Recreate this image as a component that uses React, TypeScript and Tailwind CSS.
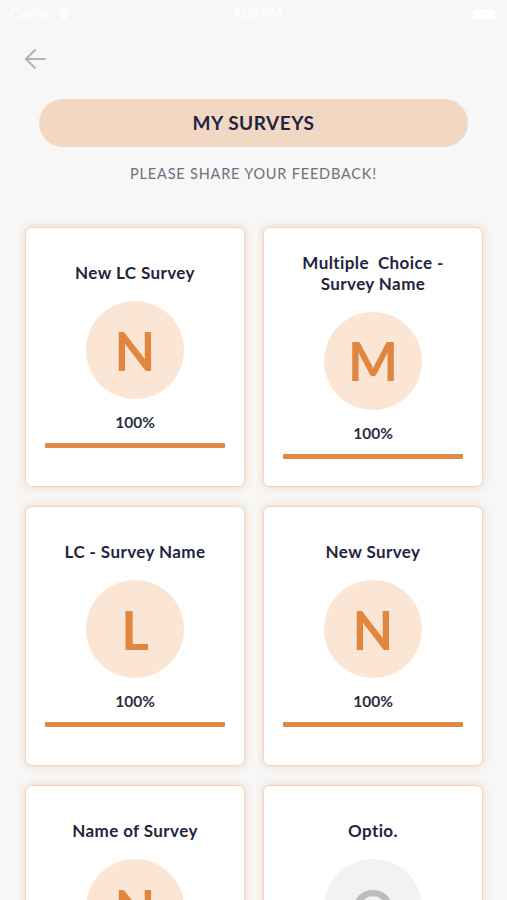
import React from "react";

type Survey = { title: React.ReactNode; letter: string; gray?: boolean };

const surveys: Survey[] = [
  { title: "New LC Survey", letter: "N" },
  {
    title: (
      <>
        Multiple{"\u00a0"} Choice -<br />
        Survey Name
      </>
    ),
    letter: "M",
  },
  { title: "LC - Survey Name", letter: "L" },
  { title: "New Survey", letter: "N" },
  { title: "Name of Survey", letter: "N" },
  { title: "Optio.", letter: "O", gray: true },
];

function Card({ s }: { s: Survey }) {
  return (
    <div className="h-[260px] bg-white rounded-[7px] border border-[#f2d6c2] shadow-[0_0_6px_2px_rgba(240,205,180,0.55)] flex flex-col items-center justify-center px-[19px]">
      <div className="-mt-[4px] text-[17px] leading-[21px] tracking-[0.4px] font-bold text-[#1f2541] text-center">
        {s.title}
      </div>
      <div
        className={`mt-[18px] w-[98px] h-[98px] rounded-full flex items-center justify-center ${
          s.gray ? "bg-[#f2f2f2]" : "bg-[#fbe6d6]"
        }`}
      >
        <span
          className={`text-[53px] leading-none font-bold ${s.gray ? "text-[#bdbdbd]" : "text-[#e0863f]"}`}
        >
          {s.letter}
        </span>
      </div>
      <div className="mt-[13px] text-[15.5px] leading-[20px] font-bold text-[#2a2f44]">100%</div>
      <div className="mt-[11px] w-full h-[5px] bg-[#e08944] rounded-[1px]" />
    </div>
  );
}

export default function App() {
  return (
    <div
      className="min-h-screen bg-[#f7f7f7] overflow-hidden"
      style={{ fontFamily: "Lato, 'Open Sans', sans-serif" }}
    >
      {/* status bar */}
      <div className="h-[27px] flex items-center justify-between px-[10px] text-white text-[13px] font-semibold">
        <div className="flex items-center gap-[6px]">
          <span>Carrier</span>
          <svg width="16" height="12" viewBox="0 0 16 12" fill="white">
            <path d="M8 12 L5.5 9 A3.5 3.5 0 0 1 10.5 9 Z" />
            <path d="M3.5 7 A6.5 6.5 0 0 1 12.5 7 L11.3 8.3 A4.8 4.8 0 0 0 4.7 8.3 Z" />
            <path d="M1 4.3 A10 10 0 0 1 15 4.3 L13.8 5.6 A8.3 8.3 0 0 0 2.2 5.6 Z" />
          </svg>
        </div>
        <span className="-ml-[30px]">4:09 PM</span>
        <div className="w-[22px] h-[10px] bg-white rounded-[2px] mr-[2px]" />
      </div>

      {/* back arrow */}
      <div className="pl-[24px] pt-[21px] h-[72px]">
        <svg width="23" height="22" viewBox="0 0 23 22" fill="none" stroke="#b3b3b3" strokeWidth="2" strokeLinecap="round" strokeLinejoin="round">
          <path d="M21 11 H2" />
          <path d="M11 2 L2 11 L11 20" />
        </svg>
      </div>

      {/* title pill */}
      <div className="mx-[39px] h-[48px] rounded-full bg-[#f2d8c3] flex items-center justify-center">
        <span className="text-[19px] font-bold tracking-[0.5px] text-[#1f2541]">MY SURVEYS</span>
      </div>

      <div className="mt-[17px] text-center text-[14.5px] leading-[20px] tracking-[0.8px] text-[#6d717c]">
        PLEASE SHARE YOUR FEEDBACK!
      </div>

      <div className="mt-[43px] pl-[25px] pr-[24px] grid grid-cols-2 gap-x-[18px] gap-y-[19px]">
        {surveys.map((s, i) => (
          <Card key={i} s={s} />
        ))}
      </div>
    </div>
  );
}
